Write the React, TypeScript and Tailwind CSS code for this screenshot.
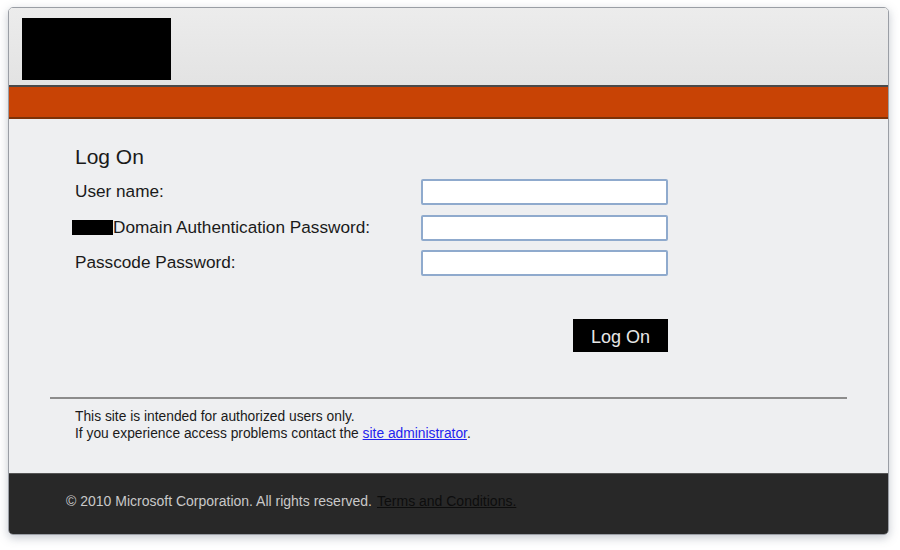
export default function App() {
  const fields = [
    { label: "User name:", redacted: false },
    { label: "Domain Authentication Password:", redacted: true },
    { label: "Passcode Password:", redacted: false },
  ];

  return (
    <div className="w-[900px] h-[550px] bg-white pt-[7px] pl-[8px] font-['Liberation_Sans',Arial,sans-serif]">
      <div className="w-[881px] rounded-[5px] border border-[#9a9ea5] shadow-[0_3px_10px_rgba(90,100,120,0.35)] overflow-hidden">
        {/* header */}
        <div className="h-[77px] bg-gradient-to-b from-[#ececec] to-[#e3e3e3] pl-[13px] pt-[10px]">
          <div className="w-[149px] h-[62px] bg-black" />
        </div>
        <div className="h-[2px] bg-[#4a4a4a]" />
        <div className="h-[30px] bg-[#c84305]" />
        <div className="h-[2px] bg-[#7c3208]" />

        {/* body */}
        <div className="h-[354px] bg-[#eeeff1] pt-[26px]">
          <div className="pl-[66px] pr-[220px]">
            <h1 className="text-[21px] leading-[24px] text-[#1a1a1a] mb-[10px]">Log On</h1>
            <div className="flex flex-col gap-[9.5px]">
              {fields.map((f) => (
                <div key={f.label} className="flex items-center h-[26px]">
                  <div className="w-[347px] flex items-center text-[17.2px] text-[#1a1a1a]">
                    {f.redacted && <span className="w-[41px] h-[15px] bg-black -ml-[3px]" />}
                    {f.label}
                  </div>
                  <input
                    type={f.redacted || f.label.startsWith("Pass") ? "password" : "text"}
                    className="w-[247px] h-[26px] bg-white border-2 border-[#8faacd] rounded-[2px] outline-none"
                  />
                </div>
              ))}
            </div>
            <div className="flex justify-end mt-[43px]">
              <button className="w-[95px] h-[33px] bg-black text-[#e6e6e6] text-[18px] pt-[3px]">Log On</button>
            </div>
          </div>
          <div className="mx-[41px] mt-[45px] h-[2px] bg-[#8c8c8c]" />
          <div className="pl-[66px] pt-[9px] text-[13.8px] leading-[17px] text-[#1a1a1a]">
            <p>This site is intended for authorized users only.</p>
            <p>
              If you experience access problems contact the{" "}
              <a href="#" className="text-[#2323ee] underline">site administrator</a>.
            </p>
          </div>
        </div>

        {/* footer */}
        <div className="h-[61px] bg-[#282828] border-t border-[#555] flex items-center pl-[57px] pb-[6px] text-[14px] text-[#c9c9c9]">
          <span>© 2010 Microsoft Corporation. All rights reserved.</span>
          <a href="#" className="ml-[5px] text-[#0d0d0d] underline">Terms and Conditions.</a>
        </div>
      </div>
    </div>
  );
}
